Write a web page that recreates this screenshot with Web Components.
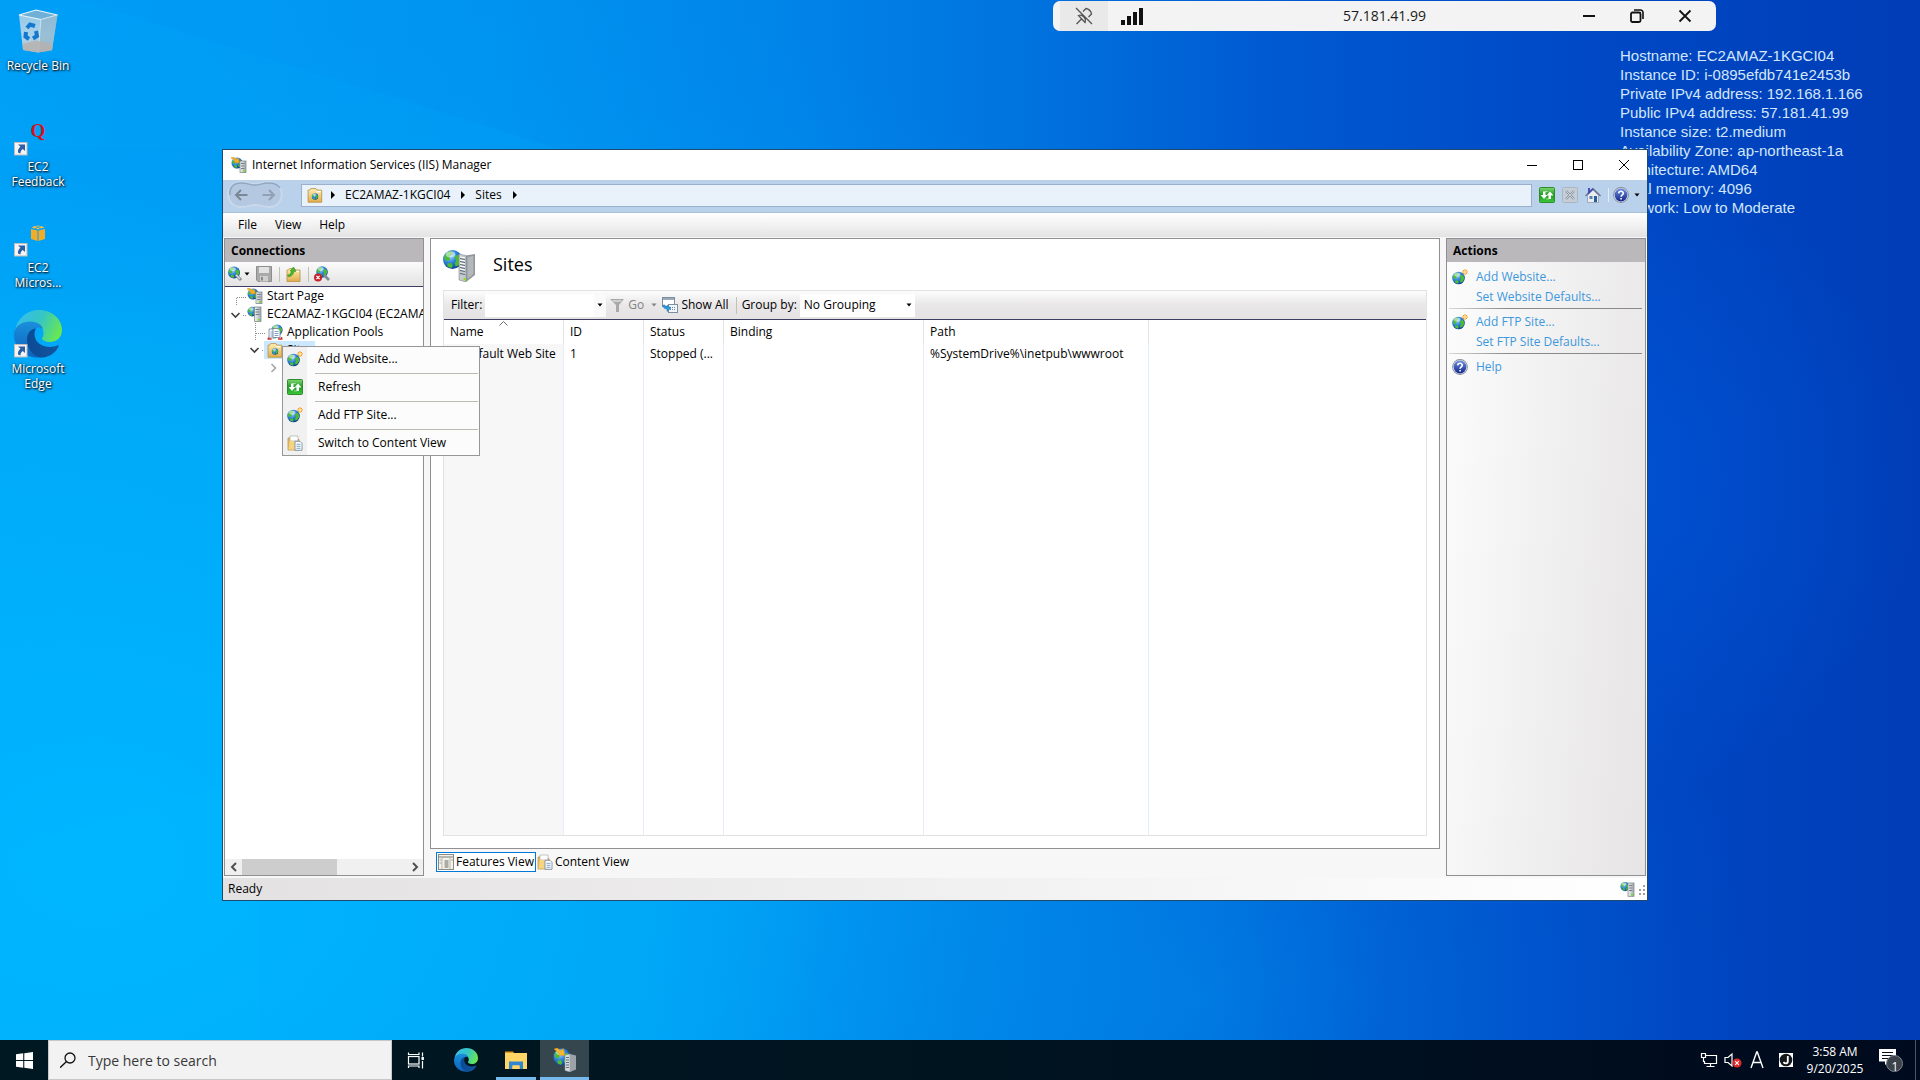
<!DOCTYPE html>
<html lang="en">
<head>
<meta charset="utf-8">
<title>Remote Desktop - IIS Manager</title>
<style>
  html, body { height: 100%; margin: 0; overflow: hidden; }
  body { font: 12px/16px "Open Sans", "Noto Sans", sans-serif; color: #000; }
</style>
</head>
<body>
<remote-desktop>
  <desktop-icon icon="bin">Recycle Bin</desktop-icon>
  <desktop-icon icon="quora" shortcut>EC2 Feedback</desktop-icon>
  <desktop-icon icon="cube" shortcut>EC2 Micros...</desktop-icon>
  <desktop-icon icon="edge" shortcut>Microsoft Edge</desktop-icon>

  <host-info slot="info"></host-info>
  <rdp-bar slot="bar">57.181.41.99</rdp-bar>

  <app-window slot="window" caption="Internet Information Services (IIS) Manager">
    <address-bar></address-bar>
    <menu-bar></menu-bar>
    <iis-workspace></iis-workspace>
    <status-bar>Ready</status-bar>
  </app-window>

  <context-menu slot="menu">
    <menu-entry icon="globe-new">Add Website...</menu-entry>
    <menu-entry icon="refresh">Refresh</menu-entry>
    <menu-entry icon="globe-new">Add FTP Site...</menu-entry>
    <menu-entry icon="content">Switch to Content View</menu-entry>
  </context-menu>

  <task-bar slot="taskbar"></task-bar>
</remote-desktop>

<script>
/* ---------- icon drawings ---------- */
const globe = (cx, cy, r) => `
  <circle cx="${cx}" cy="${cy}" r="${r}" fill="url(#gl)"/>
  <g transform="translate(${cx} ${cy}) scale(${r / 6})">
    <path d="M-5.2-1.5C-4.5-3.6-3-5-1-5.3L.4-4-.8-2.6-2-1.8-1.6-.2-2.8 1-4.4.6zM1.2-1.6 3.4-3 5-2 5.4.6 4 3.4 2 4.6 1.4 2.4 2.4.8zM-3.4 2.6-.8 2.2.2 4-.8 5.4-3 4.6z" fill="#4cbc33"/>
    <ellipse cx="-1.2" cy="-3.2" rx="3" ry="1.8" fill="#fff" opacity=".5"/>
  </g>`;
const server = (x, y, w, h) => `
  <rect x="${x}" y="${y}" width="${w}" height="${h}" fill="url(#sv)" stroke="#767e85" stroke-width=".7"/>
  <path d="M${x + 1} ${y + 2.5}h${w - 2.5}M${x + 1} ${y + 5}h${w - 2.5}M${x + 1} ${y + 7.5}h${w - 2.5}" stroke="#6a747c" stroke-width=".9"/>
  <rect x="${x + w - 3}" y="${y + h - 2.6}" width="2" height="1.8" fill="#7be01c"/>`;
const folder = (x, y, s) => `
  <g transform="translate(${x} ${y}) scale(${s})">
    <path d="M1 3V14.5h13V3H9.5L8.5 1.5h-5L2.5 3z" fill="url(#fd)" stroke="#b8913f" stroke-width=".8"/>
    <path d="M9 4.5h4" stroke="#fff" stroke-width="1.2"/>
  </g>`;
const star = `<path d="M13 0v6M10 3h6M11 1l4 4M15 1l-4 4" stroke="#f39a16" stroke-width="1"/><circle cx="13" cy="3" r="1.3" fill="#ffe08a"/>`;
const page = (x, y) => `<path d="M${x} ${y}h5l2 2v7h-7z" fill="#fff" stroke="#6c7f93" stroke-width=".8"/><path d="M${x + 1.5} ${y + 3}h4M${x + 1.5} ${y + 5}h4M${x + 1.5} ${y + 7}h4" stroke="#5b8dc4" stroke-width=".8"/>`;

const defs = `<defs>
  <radialGradient id="gl" cx=".35" cy=".3" r=".8"><stop offset="0" stop-color="#b4e2ff"/><stop offset=".45" stop-color="#2f86da"/><stop offset="1" stop-color="#0a338a"/></radialGradient>
  <linearGradient id="sv"><stop offset="0" stop-color="#f1f4f6"/><stop offset="1" stop-color="#a3abb1"/></linearGradient>
  <linearGradient id="fd" x2="0" y2="1"><stop offset="0" stop-color="#fdeeb4"/><stop offset="1" stop-color="#e2ad4c"/></linearGradient>
  <linearGradient id="gr" x2="0" y2="1"><stop offset="0" stop-color="#7fd873"/><stop offset=".5" stop-color="#1f9a22"/><stop offset="1" stop-color="#3cc83a"/></linearGradient>
  <linearGradient id="hp" x2="0" y2="1"><stop offset="0" stop-color="#6f8fe0"/><stop offset="1" stop-color="#12268c"/></linearGradient>
  <linearGradient id="e1" x1="0" y1=".3" x2="1" y2=".6"><stop offset="0" stop-color="#36bdee"/><stop offset=".5" stop-color="#35c6c4"/><stop offset="1" stop-color="#6ae94d"/></linearGradient>
  <linearGradient id="e2" x2="0" y2="1"><stop offset="0" stop-color="#1a8fdc"/><stop offset="1" stop-color="#0d62bd"/></linearGradient>
  <linearGradient id="e3" x2="1"><stop offset="0" stop-color="#0b4a94"/><stop offset="1" stop-color="#14559f"/></linearGradient>
  <linearGradient id="bn" x2="0" y2="1"><stop offset="0" stop-color="#9fcbe6"/><stop offset=".6" stop-color="#b9d6e8"/><stop offset="1" stop-color="#c9ccd0"/></linearGradient>
</defs>`;

const ICONS = {
  'iis': [16, globe(6, 6, 5.5) + server(9, 4, 6, 11.6) + `<path d="M0 .8 3 .3 5.2 2.600 7.500 1l.8 5-5-.6L4 4z" fill="#f9b02a" stroke="#c9780a" stroke-width=".4"/>`],
  'server': [16, globe(5.2, 5.6, 4.8) + server(7.500, 1, 6.500, 14.5)],
  'status-server': [16, globe(5, 5.6, 4.6) + server(8, 2, 6, 13.3)],
  'sites': [16, folder(0, 0, 1.05) + globe(8, 9.5, 3.2)],
  'pools': [16, globe(10, 6, 5.6) + page(2, 5) + page(6, 4.500) + `<path d="M.5 15h4M11 15h4.500M1.500 13.500v1.500M14.500 13v2" stroke="#d1322c" stroke-width="1.400"/>`],
  'connect': [16, globe(7, 6.5, 6) + `<path d="m9 9 5 5" stroke="#7b8b98" stroke-width="3"/><path d="m9 9 4 4" stroke="#dbe3e9" stroke-width="1.2"/>`],
  'disconnect': [16, globe(8, 6, 5.8) + `<path d="m10 9 5 5" stroke="#7b8b98" stroke-width="2.6"/><circle cx="4" cy="11.5" r="4" fill="#c8202a"/><path d="m2.4 9.9 3.2 3.2M5.6 9.9l-3.2 3.2" stroke="#fff" stroke-width="1.3"/>`],
  'save': [16, `<path d="M.5.5h15v15H2l-1.5-1.5z" fill="#a9a9a9" stroke="#8e8e8e"/><rect x="3" y="1" width="10" height="6" fill="#e3e3e3"/><rect x="4" y="10" width="8" height="5.5" fill="#cfcfcf"/><rect x="5" y="11" width="2" height="3.5" fill="#8a8a8a"/>`],
  'folder-up': [16, folder(1, 1, 1) + `<path d="M2.5 9C4 9 6 8 6.5 5H5l3.5-4L11 5.5 9 5.3C8.500 9 5.500 11 3 10.500z" fill="#48b828" stroke="#2b8213" stroke-width=".5"/>`],
  'sites-big': [32, globe(9.500, 9.500, 9.500) + `<path d="M16 4 23 5.500V32L16 30z" fill="#c3cad0" stroke="#838b92" stroke-width=".6"/><path d="M23 5.500 32 4V25L23 32z" fill="#8f959a"/><path d="M24.500 7 30.500 6v18l-6 5z" fill="#b4b8bb"/><path d="M17 8.500l5 1M17 11.500l5 1M17 14.500l5 1M17 17.500l5 1M17 20.500l5 1M17 23.500l5 1" stroke="#5f6972" stroke-width="1"/><path d="M17 7l5 1M17 10l5 1M17 13l5 1M17 16l5 1M17 19l5 1" stroke="#fff" stroke-width="1"/><rect x="20.500" y="28" width="2.500" height="2.500" fill="#8ce01e"/>`],
  'funnel': [16, `<path d="M1 2h14l-5 6v7H7V8z" fill="#a9a9a9"/><path d="M3 3h10l-1.500 2h-7z" fill="#cfcfcf"/>`],
  'show-all': [16, `<rect x=".5" y=".5" width="12" height="9" fill="#fff" stroke="#7d8ea0"/><path d="M1 2h11" stroke="#7d8ea0" stroke-width="1.500"/><rect x="6.500" y="7.500" width="9" height="8" fill="#f3f6f9" stroke="#7d8ea0"/><path d="M8 10.500h6M8 12.500h6" stroke="#6480a4" stroke-dasharray="1 1"/><path d="M1 8c0 3 2 4 4 4v2.500L9 11 5 8v2C4 10 3 9.500 3 8z" fill="#2b9be0" stroke="#0f5f9c" stroke-width=".4"/>`],
  'globe-new': [16, globe(6.500, 9, 6.300) + star],
  'refresh': [16, `<rect x=".5" y=".5" width="15" height="15" rx="1" fill="url(#gr)" stroke="#2e8c2b"/><path d="M4 4.500h2.500v3.500h2L5 12 1.500 8H4zM12 12H9.500V8.500h-2L11 4.500 14.500 8.500H12z" fill="#fff"/><path d="M6.500 4.500h2M7.500 12h2" stroke="#fff" stroke-width="1.200" stroke-dasharray="1 .6"/>`],
  'stop': [16, `<rect x=".5" y=".5" width="15" height="15" rx="1" fill="#c5ced7" stroke="#aab6c1"/><path d="m4 4 8 8M12 4l-8 8" stroke="#8f9aa4" stroke-width="2.400"/><path d="m4 4 8 8M12 4l-8 8" stroke="#d7dee5" stroke-width=".8"/>`],
  'home': [16, `<path d="M2.500 8.500 8 3l5.500 5.500V15.500h-11z" fill="#e9edf2" stroke="#8794a6" stroke-width=".7"/><path d="M3 1h2v4L3 7z" fill="#4a54b8"/><path d="M.5 9 8 1.700 15.500 9" fill="none" stroke="#6a7190" stroke-width="1.300"/><path d="M3 6.500 8 1.700" stroke="#3f49b8" stroke-width="1.500"/><rect x="9" y="9" width="3" height="6" fill="#2b5d9c"/><rect x="4.500" y="9" width="3" height="3" fill="#5b83b0"/>`],
  'help': [16, `<circle cx="8" cy="8" r="7.900" fill="#858c99"/><circle cx="8" cy="8" r="7.100" fill="#dfe3ea"/><circle cx="8" cy="8" r="6.400" fill="url(#hp)"/><path d="M5.700 6.400C5.800 3.600 10.300 3.700 10.300 6.200 10.300 7.900 8.100 7.800 8.100 9.700M8.100 10.900v1.600" fill="none" stroke="#fff" stroke-width="1.600"/>`],
  'content': [16, `<path d="M1 3h5l1 1.500h5V15H1z" fill="#ecc368" stroke="#b58e3d" stroke-width=".7"/><path d="M3 1h8v5H3z" fill="#fff" stroke="#a0a0a0" stroke-width=".6"/><path d="M1.500 14.500 3 6h9l-1 8.500z" fill="#f5d583"/>` + page(8, 6.300)],
  'features': [16, `<rect x=".5" y=".5" width="15" height="15" fill="#f4f2ec" stroke="#8b8b86"/><path d="M1 3h14" stroke="#b7b5ac" stroke-width="2"/><path d="M4 4v11M12 4v11" stroke="#b9b7ae"/><path d="M6.500 7h4M6.500 9h4M6.500 11h4M6.500 13h4" stroke="#55534e" stroke-width=".9"/><path d="M1.500 6h2M1.500 9h2M13 6h2" stroke="#a8a69e"/>`],
  'caret': [8, `<path d="M1.500 2.500h5L4 5.500z" fill="currentColor"/>`],
  'crumb': [8, `<path d="M2 0 6 4 2 8z" fill="#000"/>`],
  'chev-l': [10, `<path d="M7 1 3 5l4 4" fill="none" stroke="#505050" stroke-width="2"/>`],
  'chev-r': [10, `<path d="m3 1 4 4-4 4" fill="none" stroke="#505050" stroke-width="2"/>`],
  'win-min': [10, `<path d="M0 5.500h10" stroke="#000"/>`],
  'win-max': [10, `<rect x=".5" y=".5" width="9" height="9" fill="none" stroke="#000"/>`],
  'win-close': [10, `<path d="m0 0 10 10M10 0 0 10" stroke="#000"/>`],
  'rdp-min': [14, `<path d="M1 7h12" stroke="#111" stroke-width="2"/>`],
  'rdp-max': [14, `<rect x="1" y="3.500" width="9.500" height="9.500" rx="1.500" fill="none" stroke="#111" stroke-width="1.800"/><path d="M4 1h6.500A2.500 2.500 0 0 1 13 3.500V10" fill="none" stroke="#111" stroke-width="1.600"/>`],
  'rdp-close': [14, `<path d="m1.500 1.500 11 11M12.500 1.500l-11 11" stroke="#111" stroke-width="1.800"/>`],
  'pin': [18, `<g fill="none" stroke="#555" stroke-width="1.300"><path d="M8 4.500 11 1.500c2.500.5 5 3 5.500 5.500l-3 3M3.500 8.500C6 7.500 8 9 9 10s2 2.500 1 5.500zM6.500 12l-5 5M1 1l16 16"/></g>`],
  'signal': [22, `<path d="M0 15h4v5H0zM6 11h4v9H6zM12 7h4v13h-4zM18 3h4v17h-4z" fill="#111"/>`],
  'arrow': [14, `<rect x=".5" y=".5" width="12.500" height="12.500" fill="#f4f4f4" stroke="#bdbdbd"/><path d="M4 2.500h7V9L8.800 7C7 8.500 6.500 9.500 6.500 11.500L4 10.500C3.500 8 5 6 6.500 4.800z" fill="#2d5fa6"/>`],
  'bin': [48, `<path d="M5 8 22 3 43.500 8 38 43 24 45.500 9 43z" fill="url(#bn)" opacity=".92"/><path d="M5 8 22 3 43.500 8 27 12.500z" fill="#6fb0d6" stroke="#e9f4fb" stroke-width="1.200"/><path d="M27 12.500 24.500 45" stroke="#e2eef5" stroke-width="1"/><path d="M27 12.500 43.500 8 38 43 24.500 45.500z" fill="#86a9bf" opacity=".45"/><path d="M8.500 37 22 33.500 39 37 38 43.500 24 45.500 9 43z" fill="#b5b0ae" opacity=".8"/><g fill="none" stroke="#1478cf" stroke-width="4"><path d="m13 21 3-3.500 5 1.500"/><path d="m22 24 1 5-4 2.500"/><path d="m15 32-3.500-2.500.5-4.500"/></g>`],
  'quora': [48, `<text x="24" y="29" font-family="Liberation Serif,serif" font-weight="bold" font-size="19" text-anchor="middle" fill="#d3121e" style="text-shadow:none">Q</text>`],
  'cube': [48, `<path d="m17 20 6.500 1.500V32L17 30zM31 20l-6.500 1.500V32L31 30z" fill="#f3ac28"/><path d="m17.500 18.500 3-1.500 3 1-2.500 1.500zM30.500 18.500l-3-1.500-3 1 2.500 1.500zM24 16.500l2 .6-2 .7-2-.7zM24 18.800l2 .8-2 .9-2-.9z" fill="#f8bb45"/>`],
  'edge': [48, `<path d="M1 21C3 8 13 0 25 0c13 0 23 9 23 20 0 8-6 12-12 12-5 0-8-2-8-3.500 0-1 1.500-2 1.500-5C29.500 17 24 13 17 13 8 13 2 19 1 21z" fill="url(#e1)"/><path d="M1 20C3 15 9 11.500 16 11.500c8 0 12 4 13 7.500-2-1.500-4-1.500-5-1.500-5 1-8 6-8 12 0 9 6 16 13 17.800C14 49.500 0 40 0 25c0-2 .5-3.500 1-5z" fill="url(#e2)"/><path d="M21 18.500C15 20 13 25 13 30c0 10 8 18 16 17.500 8-1 13.500-6 15.500-11 .5-1-.5-1.500-1.500-1-7 3.500-22 1-22.500-11 0-2.500.5-4.500 1.500-6z" fill="url(#e3)"/>`],
  'start': [16, `<path d="M0 2.200 6.800 1.200V7.500H0zM7.800 1.100 16 0V7.500H7.800zM0 8.500h6.800v6.300L0 13.800zM7.800 8.500H16V16l-8.200-1.100z" fill="#fff"/>`],
  'search': [16, `<circle cx="10" cy="6" r="5" fill="none" stroke="#111" stroke-width="1.300"/><path d="M6.500 9.500 0 15.700" stroke="#111" stroke-width="1.400"/>`],
  'taskview': [18, `<g fill="none" stroke="#fff" stroke-width="1.200"><rect x="1.500" y="5.500" width="10.500" height="7.500"/><path d="M1.500 1.500v2H12v-2M1.500 17v-2H12v2M15.500 1.500v4M15.500 10v7.500"/></g><rect x="14.500" y="6" width="2.400" height="3" fill="#fff"/>`],
  'explorer': [24, `<path d="M1 3.500h8l1.500 2H1z" fill="#e09b1e"/><path d="M1 5h22v16H1z" fill="#ffd566"/><path d="M5 21v-7.500h14V21h-3.500v-3.500h-7V21z" fill="#2f86cf"/><path d="M8.500 17.500h7V21h-7z" fill="#ffd566"/>`],
  'iis-big': [24, globe(9, 9, 8.500) + `<path d="M12 7 17 6V24L12 22.500z" fill="#d4dade" stroke="#8a9299" stroke-width=".5"/><path d="M17 6l6 1.500v14L17 24z" fill="#9ba3a9"/><path d="M13 9.500h3M13 12h3M13 14.500h3M13 17h3M13 19.500h3" stroke="#59636b" stroke-width=".9"/><path d="M1 1 4.500 0l3 3L10.500.500l1 7-6-.3L6.500 5.500z" fill="#ffb52e" stroke="#d98a0a" stroke-width=".4"/>`],
  'network': [18, `<g fill="none" stroke="#fff" stroke-width="1.200"><path d="M6 4.500h10.500v8H4.500V10M10.500 12.500v3M6.500 15.500h8"/><path d="M1.500 2.500h4v4h-4zM3.500 6.500V11"/></g>`],
  'muted': [18, `<path d="M1 6.500h3L8 3v12l-4-3.500H1z" fill="none" stroke="#fff" stroke-width="1.200"/><circle cx="13" cy="12" r="4.500" fill="#e02828"/><path d="m11.200 10.200 3.600 3.600M14.800 10.200l-3.600 3.600" stroke="#fff" stroke-width="1.100"/>`],
  'ime-a': [18, `<path d="M3 17 8.700 1h.6L15 17M5 11.500h8" fill="none" stroke="#fff" stroke-width="1.400"/>`],
  'ime-j': [14, `<rect width="14" height="14" fill="#fff"/><circle cx="7" cy="7" r="6.300" fill="#14181c"/><path d="M8.800 3v5.500c0 2.400-3.800 2.600-4 .3" fill="none" stroke="#fff" stroke-width="1.800"/>`],
  'notify': [24, `<path d="M0 1h17v12.500H10L6 17v-3.500H0z" fill="#fff"/><path d="M3 4.500h11M3 7.500h11M3 10.500h7" stroke="#04101c" stroke-width="1.200"/><circle cx="15.500" cy="15.500" r="8" fill="#3b4249" stroke="#7e858c"/>`]
};

const define = (name, html) => customElements.define(name, class extends HTMLElement {
  connectedCallback() {
    if (this.shadowRoot) return;
    this.attachShadow({ mode: 'open' }).innerHTML = typeof html === 'function' ? html(this) : html;
  }
});

const RESET = `
  :host, *, *::before, *::after { box-sizing: border-box; }
  button, input, select { font: inherit; color: inherit; margin: 0; padding: 0; border: 0; background: none; border-radius: 0; outline: 0; }
  a { color: inherit; text-decoration: none; }
  ul { list-style: none; margin: 0; padding: 0; }
  h1, h2, p { margin: 0; font: inherit; }`;

/* ---------- building blocks ---------- */
define('ui-icon', el => {
  const [box, art] = ICONS[el.getAttribute('name')];
  const size = el.getAttribute('size') || box;
  return `<style>:host{display:inline-block;flex:none;width:${size}px;height:${size}px}svg{display:block}</style>
    <svg width="${size}" height="${size}" viewBox="0 0 ${box} ${box}" aria-hidden="true">${defs}${art}</svg>`;
});

define('remote-desktop', `<style>${RESET}
  :host { display: grid; grid-template-rows: minmax(0,1fr) 40px; height: 100vh; position: relative; overflow: hidden;
    background: #0078d7; }
  .paper { position: absolute; inset: 0; width: 100%; height: 100%; }
  .icons { position: relative; display: flex; flex-direction: column; width: 76px; }
  ::slotted([slot=info]) { position: absolute; top: 46px; right: 32px; width: 268px; }
  ::slotted([slot=bar]) { position: absolute; top: 1px; left: 1053px; width: 663px; }
  ::slotted([slot=window]) { position: absolute; inset: 149px 272px 179px 222px; }
  ::slotted([slot=menu]) { position: absolute; top: 346px; left: 282px; }
  ::slotted([slot=taskbar]) { position: relative; grid-row: 2; }
</style>
<svg class="paper" viewBox="0 0 1920 1080" preserveAspectRatio="none" aria-hidden="true">
  <defs>
    <linearGradient id="base" x1="0" y1="0" x2="1" y2="0">
      <stop offset="0" stop-color="#009ff6"/><stop offset=".25" stop-color="#0094f0"/><stop offset=".42" stop-color="#0083e8"/>
      <stop offset=".54" stop-color="#0072de"/><stop offset=".66" stop-color="#005ad2"/><stop offset=".82" stop-color="#0049c6"/><stop offset="1" stop-color="#003db6"/>
    </linearGradient>
    <radialGradient id="glow" gradientUnits="userSpaceOnUse" cx="100" cy="860" r="1300" gradientTransform="translate(0 215) scale(1 .75)">
      <stop offset="0" stop-color="#00b6ff"/><stop offset=".5" stop-color="#00aefa" stop-opacity=".75"/><stop offset="1" stop-color="#0090f0" stop-opacity="0"/>
    </radialGradient>
    <radialGradient id="glow2" gradientUnits="userSpaceOnUse" cx="1200" cy="1000" r="560">
      <stop offset="0" stop-color="#008ae8" stop-opacity=".5"/><stop offset="1" stop-color="#0070e0" stop-opacity="0"/>
    </radialGradient>
    <radialGradient id="glow3" gradientUnits="userSpaceOnUse" cx="1600" cy="480" r="320">
      <stop offset="0" stop-color="#0060e6" stop-opacity=".45"/><stop offset="1" stop-color="#0060e6" stop-opacity="0"/>
    </radialGradient>
  </defs>
  <rect width="1920" height="1080" fill="url(#base)"/>
  <rect width="1920" height="1080" fill="url(#glow)"/>
  <rect width="1920" height="1080" fill="url(#glow2)"/>
  <rect width="1920" height="1080" fill="url(#glow3)"/>
  <path d="M0 0h80L560 149 0 149z" fill="#00b4ff" opacity=".14"/>
  <path d="M0 850 260 776V1080H0z" fill="#00c0ff" opacity=".1"/>
</svg>
<div class="icons"><slot></slot></div>
<slot name="info"></slot><slot name="bar"></slot><slot name="window"></slot><slot name="menu"></slot><slot name="taskbar"></slot>`);

define('desktop-icon', el => `<style>${RESET}
  :host { display: block; height: 101px; padding-top: 7px; }
  button { display: grid; justify-items: center; row-gap: 3px; width: 100%; color: #fff; line-height: 15px; text-shadow: 1px 1px 2px #000, 0 0 3px #003a66; }
  .art { display: grid; }
  .art > * { grid-area: 1 / 1; }
  .badge { align-self: end; }
  .label { max-width: 70px; }
</style>
<button type="button"><span class="art"><ui-icon name="${el.getAttribute('icon')}"></ui-icon>${el.hasAttribute('shortcut') ? '<ui-icon class="badge" name="arrow"></ui-icon>' : ''}</span>
<span class="label"><slot></slot></span></button>`);

define('host-info', `<style>:host{display:block;font:15px/19px "Liberation Sans",Arial,sans-serif;color:#d3e6fa}p{margin:0}</style>
  <p>Hostname: EC2AMAZ-1KGCI04</p><p>Instance ID: i-0895efdb741e2453b</p><p>Private IPv4 address: 192.168.1.166</p>
  <p>Public IPv4 address: 57.181.41.99</p><p>Instance size: t2.medium</p><p>Availability Zone: ap-northeast-1a</p>
  <p>Architecture: AMD64</p><p>Total memory: 4096</p><p>Network: Low to Moderate</p>`);

define('rdp-bar', `<style>${RESET}
  :host { display: flex; height: 30px; background: #f3f3f3; border-radius: 7px; padding: 0 7px; color: #1b1b1b; font-size: 14px; }
  button { width: 48px; display: grid; place-items: center; }
  .pin { background: #e9e9e9; }
  .name { flex: 1; display: grid; place-items: center; padding-left: 48px; }
</style>
<button class="pin" aria-label="Unpin"><ui-icon name="pin"></ui-icon></button>
<button aria-label="Connection quality"><ui-icon name="signal"></ui-icon></button>
<span class="name"><slot></slot></span>
<button aria-label="Minimize"><ui-icon name="rdp-min"></ui-icon></button>
<button aria-label="Restore"><ui-icon name="rdp-max"></ui-icon></button>
<button aria-label="Disconnect"><ui-icon name="rdp-close"></ui-icon></button>`);

/* ---------- IIS window ---------- */
define('app-window', el => `<style>${RESET}
  :host { display: flex; flex-direction: column; background: #f7f7f7; border: 1px solid #1d4a6e; }
  header { display: flex; align-items: center; height: 30px; flex: none; background: #fff; padding-left: 8px; }
  h1 { flex: 1; padding-left: 5px; }
  button { width: 46px; height: 30px; display: grid; place-items: center; }
</style>
<header><ui-icon name="iis"></ui-icon><h1>${el.getAttribute('caption')}</h1>
<button aria-label="Minimize"><ui-icon name="win-min"></ui-icon></button>
<button aria-label="Maximize"><ui-icon name="win-max"></ui-icon></button>
<button aria-label="Close"><ui-icon name="win-close"></ui-icon></button></header>
<slot></slot>`);

define('address-bar', `<style>${RESET}
  :host { display: flex; align-items: center; height: 33px; flex: none; background: #b9d1ea; border-bottom: 1px solid #a9c0da; padding: 0 6px 2px 4px; }
  .nav { display: grid; grid-template-columns: 28px 28px; height: 28px; margin-right: 18px; }
  .nav > svg { grid-area: 1 / 1 / 2 / 3; }
  .nav button { grid-row: 1; display: grid; place-items: center; }
  .back { grid-column: 1; }
  .fwd { grid-column: 2; }
  .path { flex: 1; display: flex; align-items: center; height: 23px; border: 1px solid #9ab0cc; background: #e9f1fa; padding-left: 5px; }
  .path ui-icon[name=crumb] { margin: 0 4px 0 6px; }
  .path a { padding: 0 3px 0 4px; }
  .tools { display: flex; align-items: center; gap: 7px; margin-left: 7px; height: 20px; }
  .tools button { display: flex; align-items: center; gap: 4px; }
  .tools i { width: 1px; height: 14px; background: #e4edf6; margin-right: -3px; }
</style>
<div class="nav"><svg width="56" height="28" aria-hidden="true"><path d="M14 1C22 1 22 3 28 3s6-2 14-2c17 0 17 25 0 25-8 0-8-2-14-2s-6 2-14 2C-3 26-3 1 14 1z" fill="#b4c9e1" stroke="#c9d9ea" stroke-width="2"/><path d="M3 14C2 6 7 2 14 2c8 0 8 2 14 2s6-2 14-2c6 0 9 2 11 5" fill="none" stroke="#8fa7c2" stroke-width="1.500"/></svg>
<button class="back" aria-label="Back"><svg width="14" height="12"><path d="M13.500 6H2M7 1 2 6l5 5" fill="none" stroke="#7b8794" stroke-width="2"/></svg></button>
<button class="fwd" aria-label="Forward"><svg width="14" height="12"><path d="M.5 6H12M7 1l5 5-5 5" fill="none" stroke="#91a1b3" stroke-width="2"/></svg></button></div>
<nav class="path"><ui-icon name="sites"></ui-icon><ui-icon name="crumb"></ui-icon><a href="#server">EC2AMAZ-1KGCI04</a><ui-icon name="crumb"></ui-icon><a href="#sites">Sites</a><ui-icon name="crumb"></ui-icon></nav>
<div class="tools"><button aria-label="Refresh"><ui-icon name="refresh"></ui-icon></button><button aria-label="Stop"><ui-icon name="stop"></ui-icon></button><button aria-label="Home"><ui-icon name="home"></ui-icon></button><i></i><button aria-label="Help"><ui-icon name="help"></ui-icon><ui-icon name="caret"></ui-icon></button></div>`);

define('menu-bar', `<style>${RESET}
  :host { display: flex; height: 25px; flex: none; padding: 0 6px; background: linear-gradient(#fff, #fafafa 20%, #e3e3e3 96%, #f7f7f7 96%); }
  button { padding: 0 9px; height: 24px; }
</style><button>File</button><button>View</button><button>Help</button>`);

define('side-pane', el => `<style>${RESET}
  :host { display: flex; flex-direction: column; width: 200px; flex: none; border: 1px solid #8f8f94; background: #fff; min-height: 0; }
  h2 { height: 23px; line-height: 23px; font-weight: 700; font-size: 12px; background: #bab8ba; padding-left: 6px; flex: none; }
</style><h2>${el.getAttribute('heading')}</h2><slot></slot>`);

define('connections-tree', `<style>${RESET}
  :host { display: flex; flex-direction: column; flex: 1; min-height: 0; }
  .bar { display: flex; align-items: center; height: 25px; flex: none; padding: 0 2px; border-bottom: 1px solid #3d3c63; background: linear-gradient(#fbfbfb, #e4e2e3); }
  .bar button { display: flex; align-items: center; }
  .bar .gap { margin-left: 5px; }
  .bar i { width: 1px; height: 15px; background: #c4c2ae; margin: 0 5px 0 7px; }
  ul { flex: 1; overflow: hidden; white-space: nowrap; }
  li { display: flex; align-items: center; height: 18px; }
  li > svg { flex: none; }
  .item { display: flex; align-items: center; gap: 4px; height: 18px; padding-right: 2px; }
  .on { background: #cce8ff; padding-left: 3px; }
  .scroll { display: flex; height: 16px; background: #f0f0f0; }
  .scroll button { width: 17px; display: grid; place-items: center; }
  .track { flex: 1; }
  .thumb { width: 58%; height: 100%; background: #cdcdcd; }
</style>
<div class="bar"><button aria-label="Connect"><ui-icon name="connect"></ui-icon><ui-icon name="caret"></ui-icon></button><button class="gap" aria-label="Save"><ui-icon name="save"></ui-icon></button><i></i><button aria-label="Up"><ui-icon name="folder-up"></ui-icon></button><i></i><button aria-label="Disconnect"><ui-icon name="disconnect"></ui-icon></button></div>
<ul>
  <li><svg width="22" height="18"><path d="M11.500 18v-8M12 10.500h10" fill="none" stroke="#8c8c8c" stroke-dasharray="1 1"/></svg><span class="item"><ui-icon name="iis"></ui-icon>Start Page</span></li>
  <li><svg width="22" height="18"><path d="m6.500 8 4 4 4-4" fill="none" stroke="#404040" stroke-width="1.600"/><path d="M18 10.500h4" stroke="#8c8c8c" stroke-dasharray="1 1"/></svg><span class="item"><ui-icon name="server"></ui-icon>EC2AMAZ-1KGCI04 (EC2AMA</span></li>
  <li><svg width="42" height="18"><path d="M30.500 0v18M31 10.500h10" fill="none" stroke="#8c8c8c" stroke-dasharray="1 1"/></svg><span class="item"><ui-icon name="pools"></ui-icon>Application Pools</span></li>
  <li><svg width="39" height="18"><path d="m25.500 7 4 4 4-4" fill="none" stroke="#404040" stroke-width="1.600"/><path d="M37 9.500h2" stroke="#8c8c8c" stroke-dasharray="1 1"/></svg><span class="item on"><ui-icon name="sites"></ui-icon>Sites</span></li>
  <li><svg width="60" height="18"><path d="m46.500 5 4 4-4 4" fill="none" stroke="#a6a6a6" stroke-width="1.600"/></svg></li>
</ul>
<div class="scroll"><button aria-label="Scroll left"><ui-icon name="chev-l"></ui-icon></button><div class="track"><div class="thumb"></div></div><button aria-label="Scroll right"><ui-icon name="chev-r"></ui-icon></button></div>`);

define('sites-view', `<style>${RESET}
  :host { display: flex; flex-direction: column; flex: 1; min-height: 0; border: 1px solid #8f8f94; background: #fff; padding: 11px 12px 12px; }
  .head { display: flex; align-items: flex-start; gap: 18px; height: 40px; flex: none; }
  h1 { font-size: 18px; line-height: 28px; }
  .list { flex: 1; display: flex; flex-direction: column; min-height: 0; border: 1px solid #e2e2e2; }
  .bar { display: flex; align-items: center; height: 29px; flex: none; padding-left: 7px; border-bottom: 1px solid #3d3c63; background: linear-gradient(#fdfdfd, #e9e7e8 50%, #e4e2e3); }
  .combo { display: flex; align-items: center; height: 23px; background: #fff; margin: 0 3px; }
  .filter input { width: 109px; height: 23px; padding: 0 4px; }
  .filter button { width: 12px; height: 23px; display: grid; place-items: center; background: #fafafa; }
  .group { display: grid; width: 115px; }
  .group > * { grid-area: 1 / 1; }
  .group select { appearance: none; width: 100%; height: 23px; padding-left: 4px; }
  .group ui-icon { justify-self: end; align-self: center; margin-right: 2px; pointer-events: none; }
  .tool { display: flex; align-items: center; gap: 3px; }
  .all { margin-left: 4px; }
  .dim { color: #848484; }
  .bar i { width: 1px; height: 17px; background: #c4c2ae; margin: 0 5px 0 7px; }
  table { width: 100%; table-layout: fixed; border-collapse: separate; border-spacing: 0; }
  th, td { text-align: left; font-weight: 400; padding: 0 0 0 6px; border-right: 1px solid #e5eef8; white-space: nowrap; vertical-align: middle; }
  th { height: 24px; border-color: #e5e5e5; padding-bottom: 1px; }
  td:first-child { padding-left: 3px; background: #f7f7f7; }
  tr > :last-child { border-right: 0; }
  tbody td { height: 20px; }
  tbody tr.rest td { height: auto; }
  .site { display: flex; align-items: center; }
  .sort { display: flex; justify-content: center; height: 0; padding-right: 6px; }
  .sort svg { flex: none; margin-top: -3px; }
  .wrap { height: 0; flex: 1; display: grid; }
  .c-name { width: 120px; }
  .c-small { width: 80px; }
  .c-bind { width: 200px; }
  .c-path { width: 225px; }
</style>
<div class="head"><ui-icon name="sites-big"></ui-icon><h1>Sites</h1></div>
<div class="list">
  <div class="bar">
    <label for="filter">Filter:</label>
    <span class="combo filter"><input id="filter" type="text"><button aria-label="Filter history"><ui-icon name="caret"></ui-icon></button></span>
    <button class="tool dim"><ui-icon name="funnel"></ui-icon>Go&nbsp;<ui-icon name="caret"></ui-icon></button>
    <button class="tool all"><ui-icon name="show-all"></ui-icon>Show All</button><i></i>
    <label for="group">Group by:</label>
    <span class="combo group"><select id="group"><option>No Grouping</option></select><ui-icon name="caret"></ui-icon></span>
  </div>
  <div class="wrap"><table>
    <colgroup><col class="c-name"><col class="c-small"><col class="c-small"><col class="c-bind"><col class="c-path"><col></colgroup>
    <thead><tr><th><div class="sort"><svg width="9" height="5" aria-hidden="true"><path d="m.5 4.500 4-4 4 4" fill="none" stroke="#6a6a6a"/></svg></div>Name</th><th>ID</th><th>Status</th><th>Binding</th><th>Path</th><th></th></tr></thead>
    <tbody>
      <tr><td><span class="site"><ui-icon name="status-server"></ui-icon>Default Web Site</span></td><td>1</td><td>Stopped (...</td><td></td><td>%SystemDrive%\\inetpub\\wwwroot</td><td></td></tr>
      <tr class="rest"><td></td><td></td><td></td><td></td><td></td><td></td></tr>
    </tbody>
  </table></div>
</div>`);

define('view-tabs', `<style>${RESET}
  :host { display: flex; align-items: flex-start; height: 29px; padding: 3px 0 0 6px; flex: none; }
  button { display: flex; align-items: center; gap: 2px; height: 20px; padding: 0 1px; }
  .on { border: 1px solid #0078d7; background: #fff; }
</style><button class="on"><ui-icon name="features"></ui-icon>Features View</button><button><ui-icon name="content"></ui-icon>Content View</button>`);

define('actions-list', `<style>${RESET}
  :host { display: block; flex: 1; padding: 5px 3px 0 2px; background: linear-gradient(95deg, #fcfcfc, #e6e4e5); color: #3c97dc; }
  li { display: flex; align-items: center; height: 20px; padding-left: 3px; }
  a { padding-left: 8px; }
  .sub { padding-left: 19px; }
  hr { height: 1px; margin: 1px 0 3px; border: 0; background: linear-gradient(90deg, #d8d8d8, #8a8a8a 30%); }
</style>
<ul><li><ui-icon name="globe-new"></ui-icon><a href="#add-site">Add Website...</a></li><li class="sub"><a href="#site-defaults">Set Website Defaults...</a></li></ul><hr>
<ul><li><ui-icon name="globe-new"></ui-icon><a href="#add-ftp">Add FTP Site...</a></li><li class="sub"><a href="#ftp-defaults">Set FTP Site Defaults...</a></li></ul><hr>
<ul><li><ui-icon name="help"></ui-icon><a href="#help">Help</a></li></ul>`);

define('iis-workspace', `<style>
  :host { display: flex; gap: 6px; flex: 1; min-height: 0; padding: 0 1px; }
  .centre { flex: 1; display: flex; flex-direction: column; min-width: 0; }
  side-pane { margin-bottom: 2px; }
</style>
<side-pane heading="Connections"><connections-tree></connections-tree></side-pane>
<div class="centre"><sites-view></sites-view><view-tabs></view-tabs></div>
<side-pane heading="Actions"><actions-list></actions-list></side-pane>`);

define('status-bar', `<style>
  :host { display: flex; align-items: center; justify-content: space-between; height: 22px; flex: none; padding: 0 0 0 5px; background: linear-gradient(90deg, #e3e1e2, #fff); }
  .end { display: flex; align-items: flex-end; gap: 1px; }
</style><span><slot></slot></span><span class="end"><ui-icon name="status-server"></ui-icon>
<svg width="10" height="12" aria-hidden="true"><path d="M6 0h2v2H6zM6 4h2v2H6zM6 8h2v2H6zM2 4h2v2H2zM2 8h2v2H2z" fill="#a0a0a0"/></svg></span>`);

/* ---------- context menu ---------- */
define('context-menu', `<style>
  :host { display: block; width: 198px; height: 110px; box-sizing: border-box; border: 1px solid #979797; padding: 1px; background: linear-gradient(90deg, #f1f1f1 24px, #fcfcfc 24px); }
</style><slot></slot>`);
define('menu-entry', el => `<style>${RESET}
  :host { display: block; }
  button { display: flex; align-items: center; width: 100%; height: 22px; gap: 15px; padding: 0 3px; }
  hr { height: 1px; margin: 3px 0 2px 31px; border: 0; background: #bdbbb0; }
  :host(:last-of-type) hr { display: none; }
</style><button><ui-icon name="${el.getAttribute('icon')}"></ui-icon><span><slot></slot></span></button><hr>`);

/* ---------- taskbar ---------- */
define('task-bar', `<style>${RESET}
  :host { display: flex; background: linear-gradient(90deg, #001822, #001420 50%, #000a1e); color: #fff; }
  .key { width: 48px; display: grid; place-items: center; }
  .search { display: flex; align-items: center; gap: 12px; width: 344px; background: #f2f2f2; border: 1px solid #c8c8c8; padding-left: 11px; color: #333; font-size: 14px; }
  .search input { flex: 1; min-width: 0; height: 100%; }
  .search input::placeholder { color: #383838; opacity: 1; }
  .app { width: 52px; border-bottom: 3px solid transparent; padding-top: 3px; }
  .open { width: 40px; margin: 0 4px; border-color: #76b9ed; }
  .active { width: 49px; background: #36464f; border-color: #76b9ed; }
  .tray { margin-left: auto; display: flex; align-items: center; }
  .tray button { display: grid; place-items: center; height: 40px; width: 24px; }
  .tray .j { width: 34px; }
  .tray .clock { width: 64px; line-height: 17px; text-align: center; }
  .tray .note { width: 48px; }
  .note > * { grid-area: 1 / 1; }
  .note span { padding: 14px 0 0 8px; }
  .peek { width: 5px; height: 40px; border-left: 1px solid #4c5560; }
</style>
<button class="key" aria-label="Start"><ui-icon name="start" size="17"></ui-icon></button>
<label class="search"><ui-icon name="search"></ui-icon><input type="search" placeholder="Type here to search"></label>
<button class="key" aria-label="Task View"><ui-icon name="taskview"></ui-icon></button>
<button class="key app" aria-label="Microsoft Edge"><ui-icon name="edge" size="24"></ui-icon></button>
<button class="key app open" aria-label="File Explorer"><ui-icon name="explorer"></ui-icon></button>
<button class="key app active" aria-label="IIS Manager"><ui-icon name="iis-big"></ui-icon></button>
<div class="tray"><button aria-label="Network"><ui-icon name="network"></ui-icon></button><button aria-label="Volume muted"><ui-icon name="muted"></ui-icon></button><button aria-label="Input mode"><ui-icon name="ime-a"></ui-icon></button><button class="j" aria-label="Input method"><ui-icon name="ime-j"></ui-icon></button>
<button class="clock"><span>3:58 AM<br>9/20/2025</span></button>
<button class="note" aria-label="Notifications"><ui-icon name="notify"></ui-icon><span>1</span></button><div class="peek"></div></div>`);
</script>
</body>
</html>
